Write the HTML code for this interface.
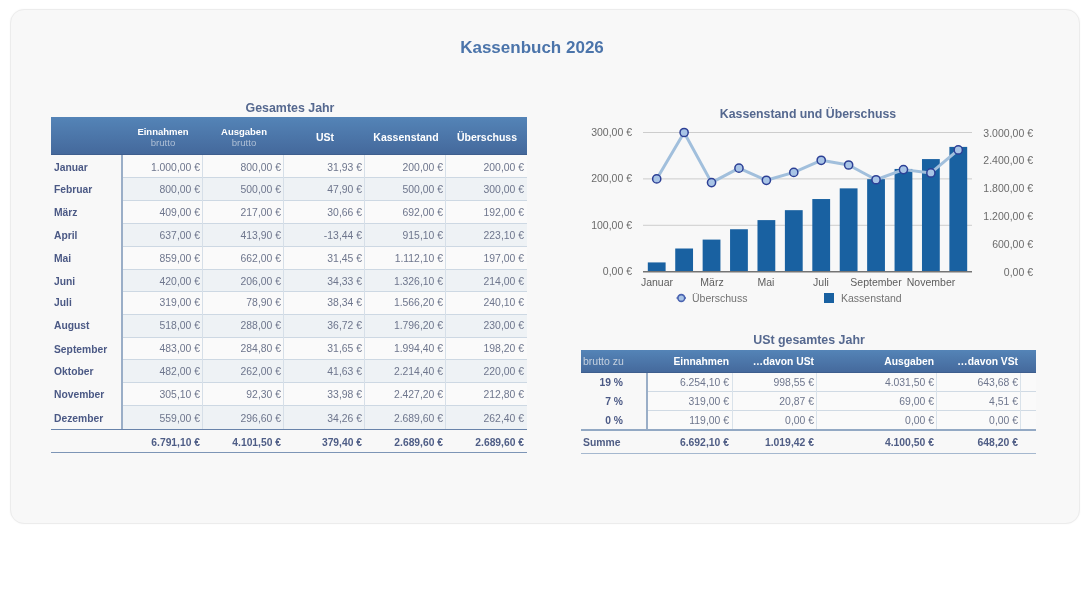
<!DOCTYPE html>
<html><head><meta charset="utf-8"><style>
html,body{margin:0;padding:0;background:#fff;width:1090px;height:593px;overflow:hidden;position:relative;font-family:"Liberation Sans", sans-serif;}
.card{position:absolute;left:10px;top:9px;width:1068px;height:513px;background:#f8f8f8;border:1px solid #ececec;border-radius:14px;box-shadow:0 0 2px rgba(0,0,0,0.04);}
.t{position:absolute;white-space:nowrap;will-change:transform;}
.r{position:absolute;}
</style></head><body>
<div class="card"></div><div class="t" style="left:231.5px;width:600px;text-align:center;top:37.52px;font-size:17px;line-height:19.55px;color:#4b74aa;font-weight:bold;">Kassenbuch 2026</div><div class="t" style="left:-10.100000000000023px;width:600px;text-align:center;top:101.28px;font-size:12.4px;line-height:14.26px;color:#55688f;font-weight:bold;">Gesamtes Jahr</div><div class="r" style="left:51.00px;top:117.00px;width:476.00px;height:37.60px;background:linear-gradient(#5484b7,#44689b);box-shadow:inset 0 -1px 0 #3e5e8e"></div><div class="t" style="left:-137.5px;width:600px;text-align:center;top:127.40px;font-size:9.5px;line-height:10.92px;color:#ffffff;font-weight:bold;">Einnahmen</div><div class="t" style="left:-137.5px;width:600px;text-align:center;top:136.91px;font-size:9.6px;line-height:11.04px;color:#aebfd5;font-weight:normal;">brutto</div><div class="t" style="left:-56.5px;width:600px;text-align:center;top:127.40px;font-size:9.5px;line-height:10.92px;color:#ffffff;font-weight:bold;">Ausgaben</div><div class="t" style="left:-56.5px;width:600px;text-align:center;top:136.91px;font-size:9.6px;line-height:11.04px;color:#aebfd5;font-weight:normal;">brutto</div><div class="t" style="left:24.5px;width:600px;text-align:center;top:131.30px;font-size:10.5px;line-height:12.07px;color:#ffffff;font-weight:bold;">USt</div><div class="t" style="left:105.5px;width:600px;text-align:center;top:131.30px;font-size:10.5px;line-height:12.07px;color:#ffffff;font-weight:bold;">Kassenstand</div><div class="t" style="left:186.5px;width:600px;text-align:center;top:131.30px;font-size:10.5px;line-height:12.07px;color:#ffffff;font-weight:bold;">Überschuss</div><div class="r" style="left:122.00px;top:154.60px;width:405.00px;height:22.80px;background:#fafafa;"></div><div class="r" style="left:122.00px;top:177.40px;width:405.00px;height:23.00px;background:#eef2f5;"></div><div class="r" style="left:122.00px;top:200.40px;width:405.00px;height:23.10px;background:#fafafa;"></div><div class="r" style="left:122.00px;top:223.50px;width:405.00px;height:22.90px;background:#eef2f5;"></div><div class="r" style="left:122.00px;top:246.40px;width:405.00px;height:23.00px;background:#fafafa;"></div><div class="r" style="left:122.00px;top:269.40px;width:405.00px;height:21.70px;background:#eef2f5;"></div><div class="r" style="left:122.00px;top:291.10px;width:405.00px;height:23.10px;background:#fafafa;"></div><div class="r" style="left:122.00px;top:314.20px;width:405.00px;height:22.80px;background:#eef2f5;"></div><div class="r" style="left:122.00px;top:337.00px;width:405.00px;height:22.60px;background:#fafafa;"></div><div class="r" style="left:122.00px;top:359.60px;width:405.00px;height:22.70px;background:#eef2f5;"></div><div class="r" style="left:122.00px;top:382.30px;width:405.00px;height:23.00px;background:#fafafa;"></div><div class="r" style="left:122.00px;top:405.30px;width:405.00px;height:24.10px;background:#eef2f5;"></div><div class="r" style="left:122.00px;top:176.90px;width:405.00px;height:1.00px;background:#cdd8e3;"></div><div class="r" style="left:122.00px;top:199.90px;width:405.00px;height:1.00px;background:#cdd8e3;"></div><div class="r" style="left:122.00px;top:223.00px;width:405.00px;height:1.00px;background:#cdd8e3;"></div><div class="r" style="left:122.00px;top:245.90px;width:405.00px;height:1.00px;background:#cdd8e3;"></div><div class="r" style="left:122.00px;top:268.90px;width:405.00px;height:1.00px;background:#cdd8e3;"></div><div class="r" style="left:122.00px;top:290.60px;width:405.00px;height:1.00px;background:#cdd8e3;"></div><div class="r" style="left:122.00px;top:313.70px;width:405.00px;height:1.00px;background:#cdd8e3;"></div><div class="r" style="left:122.00px;top:336.50px;width:405.00px;height:1.00px;background:#cdd8e3;"></div><div class="r" style="left:122.00px;top:359.10px;width:405.00px;height:1.00px;background:#cdd8e3;"></div><div class="r" style="left:122.00px;top:381.80px;width:405.00px;height:1.00px;background:#cdd8e3;"></div><div class="r" style="left:122.00px;top:404.80px;width:405.00px;height:1.00px;background:#cdd8e3;"></div><div class="r" style="left:202.30px;top:154.60px;width:1.00px;height:274.70px;background:#d6dfe8;"></div><div class="r" style="left:283.30px;top:154.60px;width:1.00px;height:274.70px;background:#d6dfe8;"></div><div class="r" style="left:364.30px;top:154.60px;width:1.00px;height:274.70px;background:#d6dfe8;"></div><div class="r" style="left:445.30px;top:154.60px;width:1.00px;height:274.70px;background:#d6dfe8;"></div><div class="r" style="left:121.20px;top:154.60px;width:1.60px;height:274.70px;background:#9aaec7;"></div><div class="r" style="left:51.00px;top:428.70px;width:476.00px;height:1.40px;background:#6883aa;"></div><div class="r" style="left:51.00px;top:451.80px;width:476.00px;height:1.30px;background:#7d95b6;"></div><div class="t" style="left:54px;top:161.68px;font-size:10.3px;line-height:11.85px;color:#4b5985;font-weight:bold;">Januar</div><div class="t" style="left:-199.8px;width:400px;text-align:right;top:161.59px;font-size:10.4px;line-height:11.96px;color:#6e768d;font-weight:normal;">1.000,00 €</div><div class="t" style="left:-118.80000000000001px;width:400px;text-align:right;top:161.59px;font-size:10.4px;line-height:11.96px;color:#6e768d;font-weight:normal;">800,00 €</div><div class="t" style="left:-37.80000000000001px;width:400px;text-align:right;top:161.59px;font-size:10.4px;line-height:11.96px;color:#6e768d;font-weight:normal;">31,93 €</div><div class="t" style="left:43.19999999999999px;width:400px;text-align:right;top:161.59px;font-size:10.4px;line-height:11.96px;color:#6e768d;font-weight:normal;">200,00 €</div><div class="t" style="left:124.20000000000005px;width:400px;text-align:right;top:161.59px;font-size:10.4px;line-height:11.96px;color:#6e768d;font-weight:normal;">200,00 €</div><div class="t" style="left:54px;top:184.08px;font-size:10.3px;line-height:11.85px;color:#4b5985;font-weight:bold;">Februar</div><div class="t" style="left:-199.8px;width:400px;text-align:right;top:183.99px;font-size:10.4px;line-height:11.96px;color:#6e768d;font-weight:normal;">800,00 €</div><div class="t" style="left:-118.80000000000001px;width:400px;text-align:right;top:183.99px;font-size:10.4px;line-height:11.96px;color:#6e768d;font-weight:normal;">500,00 €</div><div class="t" style="left:-37.80000000000001px;width:400px;text-align:right;top:183.99px;font-size:10.4px;line-height:11.96px;color:#6e768d;font-weight:normal;">47,90 €</div><div class="t" style="left:43.19999999999999px;width:400px;text-align:right;top:183.99px;font-size:10.4px;line-height:11.96px;color:#6e768d;font-weight:normal;">500,00 €</div><div class="t" style="left:124.20000000000005px;width:400px;text-align:right;top:183.99px;font-size:10.4px;line-height:11.96px;color:#6e768d;font-weight:normal;">300,00 €</div><div class="t" style="left:54px;top:207.18px;font-size:10.3px;line-height:11.85px;color:#4b5985;font-weight:bold;">März</div><div class="t" style="left:-199.8px;width:400px;text-align:right;top:207.09px;font-size:10.4px;line-height:11.96px;color:#6e768d;font-weight:normal;">409,00 €</div><div class="t" style="left:-118.80000000000001px;width:400px;text-align:right;top:207.09px;font-size:10.4px;line-height:11.96px;color:#6e768d;font-weight:normal;">217,00 €</div><div class="t" style="left:-37.80000000000001px;width:400px;text-align:right;top:207.09px;font-size:10.4px;line-height:11.96px;color:#6e768d;font-weight:normal;">30,66 €</div><div class="t" style="left:43.19999999999999px;width:400px;text-align:right;top:207.09px;font-size:10.4px;line-height:11.96px;color:#6e768d;font-weight:normal;">692,00 €</div><div class="t" style="left:124.20000000000005px;width:400px;text-align:right;top:207.09px;font-size:10.4px;line-height:11.96px;color:#6e768d;font-weight:normal;">192,00 €</div><div class="t" style="left:54px;top:230.38px;font-size:10.3px;line-height:11.85px;color:#4b5985;font-weight:bold;">April</div><div class="t" style="left:-199.8px;width:400px;text-align:right;top:230.29px;font-size:10.4px;line-height:11.96px;color:#6e768d;font-weight:normal;">637,00 €</div><div class="t" style="left:-118.80000000000001px;width:400px;text-align:right;top:230.29px;font-size:10.4px;line-height:11.96px;color:#6e768d;font-weight:normal;">413,90 €</div><div class="t" style="left:-37.80000000000001px;width:400px;text-align:right;top:230.29px;font-size:10.4px;line-height:11.96px;color:#6e768d;font-weight:normal;">-13,44 €</div><div class="t" style="left:43.19999999999999px;width:400px;text-align:right;top:230.29px;font-size:10.4px;line-height:11.96px;color:#6e768d;font-weight:normal;">915,10 €</div><div class="t" style="left:124.20000000000005px;width:400px;text-align:right;top:230.29px;font-size:10.4px;line-height:11.96px;color:#6e768d;font-weight:normal;">223,10 €</div><div class="t" style="left:54px;top:252.68px;font-size:10.3px;line-height:11.85px;color:#4b5985;font-weight:bold;">Mai</div><div class="t" style="left:-199.8px;width:400px;text-align:right;top:252.59px;font-size:10.4px;line-height:11.96px;color:#6e768d;font-weight:normal;">859,00 €</div><div class="t" style="left:-118.80000000000001px;width:400px;text-align:right;top:252.59px;font-size:10.4px;line-height:11.96px;color:#6e768d;font-weight:normal;">662,00 €</div><div class="t" style="left:-37.80000000000001px;width:400px;text-align:right;top:252.59px;font-size:10.4px;line-height:11.96px;color:#6e768d;font-weight:normal;">31,45 €</div><div class="t" style="left:43.19999999999999px;width:400px;text-align:right;top:252.59px;font-size:10.4px;line-height:11.96px;color:#6e768d;font-weight:normal;">1.112,10 €</div><div class="t" style="left:124.20000000000005px;width:400px;text-align:right;top:252.59px;font-size:10.4px;line-height:11.96px;color:#6e768d;font-weight:normal;">197,00 €</div><div class="t" style="left:54px;top:275.68px;font-size:10.3px;line-height:11.85px;color:#4b5985;font-weight:bold;">Juni</div><div class="t" style="left:-199.8px;width:400px;text-align:right;top:275.59px;font-size:10.4px;line-height:11.96px;color:#6e768d;font-weight:normal;">420,00 €</div><div class="t" style="left:-118.80000000000001px;width:400px;text-align:right;top:275.59px;font-size:10.4px;line-height:11.96px;color:#6e768d;font-weight:normal;">206,00 €</div><div class="t" style="left:-37.80000000000001px;width:400px;text-align:right;top:275.59px;font-size:10.4px;line-height:11.96px;color:#6e768d;font-weight:normal;">34,33 €</div><div class="t" style="left:43.19999999999999px;width:400px;text-align:right;top:275.59px;font-size:10.4px;line-height:11.96px;color:#6e768d;font-weight:normal;">1.326,10 €</div><div class="t" style="left:124.20000000000005px;width:400px;text-align:right;top:275.59px;font-size:10.4px;line-height:11.96px;color:#6e768d;font-weight:normal;">214,00 €</div><div class="t" style="left:54px;top:297.48px;font-size:10.3px;line-height:11.85px;color:#4b5985;font-weight:bold;">Juli</div><div class="t" style="left:-199.8px;width:400px;text-align:right;top:297.39px;font-size:10.4px;line-height:11.96px;color:#6e768d;font-weight:normal;">319,00 €</div><div class="t" style="left:-118.80000000000001px;width:400px;text-align:right;top:297.39px;font-size:10.4px;line-height:11.96px;color:#6e768d;font-weight:normal;">78,90 €</div><div class="t" style="left:-37.80000000000001px;width:400px;text-align:right;top:297.39px;font-size:10.4px;line-height:11.96px;color:#6e768d;font-weight:normal;">38,34 €</div><div class="t" style="left:43.19999999999999px;width:400px;text-align:right;top:297.39px;font-size:10.4px;line-height:11.96px;color:#6e768d;font-weight:normal;">1.566,20 €</div><div class="t" style="left:124.20000000000005px;width:400px;text-align:right;top:297.39px;font-size:10.4px;line-height:11.96px;color:#6e768d;font-weight:normal;">240,10 €</div><div class="t" style="left:54px;top:320.38px;font-size:10.3px;line-height:11.85px;color:#4b5985;font-weight:bold;">August</div><div class="t" style="left:-199.8px;width:400px;text-align:right;top:320.29px;font-size:10.4px;line-height:11.96px;color:#6e768d;font-weight:normal;">518,00 €</div><div class="t" style="left:-118.80000000000001px;width:400px;text-align:right;top:320.29px;font-size:10.4px;line-height:11.96px;color:#6e768d;font-weight:normal;">288,00 €</div><div class="t" style="left:-37.80000000000001px;width:400px;text-align:right;top:320.29px;font-size:10.4px;line-height:11.96px;color:#6e768d;font-weight:normal;">36,72 €</div><div class="t" style="left:43.19999999999999px;width:400px;text-align:right;top:320.29px;font-size:10.4px;line-height:11.96px;color:#6e768d;font-weight:normal;">1.796,20 €</div><div class="t" style="left:124.20000000000005px;width:400px;text-align:right;top:320.29px;font-size:10.4px;line-height:11.96px;color:#6e768d;font-weight:normal;">230,00 €</div><div class="t" style="left:54px;top:343.58px;font-size:10.3px;line-height:11.85px;color:#4b5985;font-weight:bold;">September</div><div class="t" style="left:-199.8px;width:400px;text-align:right;top:343.49px;font-size:10.4px;line-height:11.96px;color:#6e768d;font-weight:normal;">483,00 €</div><div class="t" style="left:-118.80000000000001px;width:400px;text-align:right;top:343.49px;font-size:10.4px;line-height:11.96px;color:#6e768d;font-weight:normal;">284,80 €</div><div class="t" style="left:-37.80000000000001px;width:400px;text-align:right;top:343.49px;font-size:10.4px;line-height:11.96px;color:#6e768d;font-weight:normal;">31,65 €</div><div class="t" style="left:43.19999999999999px;width:400px;text-align:right;top:343.49px;font-size:10.4px;line-height:11.96px;color:#6e768d;font-weight:normal;">1.994,40 €</div><div class="t" style="left:124.20000000000005px;width:400px;text-align:right;top:343.49px;font-size:10.4px;line-height:11.96px;color:#6e768d;font-weight:normal;">198,20 €</div><div class="t" style="left:54px;top:366.38px;font-size:10.3px;line-height:11.85px;color:#4b5985;font-weight:bold;">Oktober</div><div class="t" style="left:-199.8px;width:400px;text-align:right;top:366.29px;font-size:10.4px;line-height:11.96px;color:#6e768d;font-weight:normal;">482,00 €</div><div class="t" style="left:-118.80000000000001px;width:400px;text-align:right;top:366.29px;font-size:10.4px;line-height:11.96px;color:#6e768d;font-weight:normal;">262,00 €</div><div class="t" style="left:-37.80000000000001px;width:400px;text-align:right;top:366.29px;font-size:10.4px;line-height:11.96px;color:#6e768d;font-weight:normal;">41,63 €</div><div class="t" style="left:43.19999999999999px;width:400px;text-align:right;top:366.29px;font-size:10.4px;line-height:11.96px;color:#6e768d;font-weight:normal;">2.214,40 €</div><div class="t" style="left:124.20000000000005px;width:400px;text-align:right;top:366.29px;font-size:10.4px;line-height:11.96px;color:#6e768d;font-weight:normal;">220,00 €</div><div class="t" style="left:54px;top:389.18px;font-size:10.3px;line-height:11.85px;color:#4b5985;font-weight:bold;">November</div><div class="t" style="left:-199.8px;width:400px;text-align:right;top:389.09px;font-size:10.4px;line-height:11.96px;color:#6e768d;font-weight:normal;">305,10 €</div><div class="t" style="left:-118.80000000000001px;width:400px;text-align:right;top:389.09px;font-size:10.4px;line-height:11.96px;color:#6e768d;font-weight:normal;">92,30 €</div><div class="t" style="left:-37.80000000000001px;width:400px;text-align:right;top:389.09px;font-size:10.4px;line-height:11.96px;color:#6e768d;font-weight:normal;">33,98 €</div><div class="t" style="left:43.19999999999999px;width:400px;text-align:right;top:389.09px;font-size:10.4px;line-height:11.96px;color:#6e768d;font-weight:normal;">2.427,20 €</div><div class="t" style="left:124.20000000000005px;width:400px;text-align:right;top:389.09px;font-size:10.4px;line-height:11.96px;color:#6e768d;font-weight:normal;">212,80 €</div><div class="t" style="left:54px;top:412.68px;font-size:10.3px;line-height:11.85px;color:#4b5985;font-weight:bold;">Dezember</div><div class="t" style="left:-199.8px;width:400px;text-align:right;top:412.59px;font-size:10.4px;line-height:11.96px;color:#6e768d;font-weight:normal;">559,00 €</div><div class="t" style="left:-118.80000000000001px;width:400px;text-align:right;top:412.59px;font-size:10.4px;line-height:11.96px;color:#6e768d;font-weight:normal;">296,60 €</div><div class="t" style="left:-37.80000000000001px;width:400px;text-align:right;top:412.59px;font-size:10.4px;line-height:11.96px;color:#6e768d;font-weight:normal;">34,26 €</div><div class="t" style="left:43.19999999999999px;width:400px;text-align:right;top:412.59px;font-size:10.4px;line-height:11.96px;color:#6e768d;font-weight:normal;">2.689,60 €</div><div class="t" style="left:124.20000000000005px;width:400px;text-align:right;top:412.59px;font-size:10.4px;line-height:11.96px;color:#6e768d;font-weight:normal;">262,40 €</div><div class="t" style="left:-199.8px;width:400px;text-align:right;top:436.88px;font-size:10.3px;line-height:11.85px;color:#4e5d86;font-weight:bold;">6.791,10 €</div><div class="t" style="left:-118.80000000000001px;width:400px;text-align:right;top:436.88px;font-size:10.3px;line-height:11.85px;color:#4e5d86;font-weight:bold;">4.101,50 €</div><div class="t" style="left:-37.80000000000001px;width:400px;text-align:right;top:436.88px;font-size:10.3px;line-height:11.85px;color:#4e5d86;font-weight:bold;">379,40 €</div><div class="t" style="left:43.19999999999999px;width:400px;text-align:right;top:436.88px;font-size:10.3px;line-height:11.85px;color:#4e5d86;font-weight:bold;">2.689,60 €</div><div class="t" style="left:124.20000000000005px;width:400px;text-align:right;top:436.88px;font-size:10.3px;line-height:11.85px;color:#4e5d86;font-weight:bold;">2.689,60 €</div><div class="t" style="left:507.6px;width:600px;text-align:center;top:107.47px;font-size:12.3px;line-height:14.14px;color:#55688f;font-weight:bold;">Kassenstand und Überschuss</div><svg class="t" style="left:0;top:0" width="1090" height="593"><line x1="643" y1="225.30" x2="972" y2="225.30" stroke="#cdcdcd" stroke-width="1"/><line x1="643" y1="178.90" x2="972" y2="178.90" stroke="#cdcdcd" stroke-width="1"/><line x1="643" y1="132.50" x2="972" y2="132.50" stroke="#cdcdcd" stroke-width="1"/><rect x="647.81" y="262.42" width="17.8" height="9.28" fill="#1961a1"/><rect x="675.23" y="248.50" width="17.8" height="23.20" fill="#1961a1"/><rect x="702.64" y="239.59" width="17.8" height="32.11" fill="#1961a1"/><rect x="730.06" y="229.24" width="17.8" height="42.46" fill="#1961a1"/><rect x="757.48" y="220.10" width="17.8" height="51.60" fill="#1961a1"/><rect x="784.89" y="210.17" width="17.8" height="61.53" fill="#1961a1"/><rect x="812.31" y="199.03" width="17.8" height="72.67" fill="#1961a1"/><rect x="839.73" y="188.36" width="17.8" height="83.34" fill="#1961a1"/><rect x="867.14" y="179.16" width="17.8" height="92.54" fill="#1961a1"/><rect x="894.56" y="168.95" width="17.8" height="102.75" fill="#1961a1"/><rect x="921.98" y="159.08" width="17.8" height="112.62" fill="#1961a1"/><rect x="949.39" y="146.90" width="17.8" height="124.80" fill="#1961a1"/><line x1="643" y1="271.7" x2="972" y2="271.7" stroke="#747474" stroke-width="1.6"/><polyline points="656.71,178.90 684.12,132.50 711.54,182.61 738.96,168.18 766.38,180.29 793.79,172.40 821.21,160.29 848.62,164.98 876.04,179.74 903.46,169.62 930.88,172.96 958.29,149.95" fill="none" stroke="#a1bfdc" stroke-width="3" stroke-linejoin="round"/><circle cx="656.71" cy="178.90" r="4.1" fill="#a8c4e6" stroke="#2c3f95" stroke-width="1.5"/><circle cx="684.12" cy="132.50" r="4.1" fill="#a8c4e6" stroke="#2c3f95" stroke-width="1.5"/><circle cx="711.54" cy="182.61" r="4.1" fill="#a8c4e6" stroke="#2c3f95" stroke-width="1.5"/><circle cx="738.96" cy="168.18" r="4.1" fill="#a8c4e6" stroke="#2c3f95" stroke-width="1.5"/><circle cx="766.38" cy="180.29" r="4.1" fill="#a8c4e6" stroke="#2c3f95" stroke-width="1.5"/><circle cx="793.79" cy="172.40" r="4.1" fill="#a8c4e6" stroke="#2c3f95" stroke-width="1.5"/><circle cx="821.21" cy="160.29" r="4.1" fill="#a8c4e6" stroke="#2c3f95" stroke-width="1.5"/><circle cx="848.62" cy="164.98" r="4.1" fill="#a8c4e6" stroke="#2c3f95" stroke-width="1.5"/><circle cx="876.04" cy="179.74" r="4.1" fill="#a8c4e6" stroke="#2c3f95" stroke-width="1.5"/><circle cx="903.46" cy="169.62" r="4.1" fill="#a8c4e6" stroke="#2c3f95" stroke-width="1.5"/><circle cx="930.88" cy="172.96" r="4.1" fill="#a8c4e6" stroke="#2c3f95" stroke-width="1.5"/><circle cx="958.29" cy="149.95" r="4.1" fill="#a8c4e6" stroke="#2c3f95" stroke-width="1.5"/></svg><div class="t" style="left:231.60000000000002px;width:400px;text-align:right;top:265.20px;font-size:10.5px;line-height:12.07px;color:#6b6b6b;font-weight:normal;">0,00 €</div><div class="t" style="left:231.60000000000002px;width:400px;text-align:right;top:218.80px;font-size:10.5px;line-height:12.07px;color:#6b6b6b;font-weight:normal;">100,00 €</div><div class="t" style="left:231.60000000000002px;width:400px;text-align:right;top:172.40px;font-size:10.5px;line-height:12.07px;color:#6b6b6b;font-weight:normal;">200,00 €</div><div class="t" style="left:231.60000000000002px;width:400px;text-align:right;top:126.00px;font-size:10.5px;line-height:12.07px;color:#6b6b6b;font-weight:normal;">300,00 €</div><div class="t" style="left:633px;width:400px;text-align:right;top:265.70px;font-size:10.5px;line-height:12.07px;color:#6b6b6b;font-weight:normal;">0,00 €</div><div class="t" style="left:633px;width:400px;text-align:right;top:237.86px;font-size:10.5px;line-height:12.07px;color:#6b6b6b;font-weight:normal;">600,00 €</div><div class="t" style="left:633px;width:400px;text-align:right;top:210.02px;font-size:10.5px;line-height:12.07px;color:#6b6b6b;font-weight:normal;">1.200,00 €</div><div class="t" style="left:633px;width:400px;text-align:right;top:182.18px;font-size:10.5px;line-height:12.07px;color:#6b6b6b;font-weight:normal;">1.800,00 €</div><div class="t" style="left:633px;width:400px;text-align:right;top:154.34px;font-size:10.5px;line-height:12.07px;color:#6b6b6b;font-weight:normal;">2.400,00 €</div><div class="t" style="left:633px;width:400px;text-align:right;top:126.50px;font-size:10.5px;line-height:12.07px;color:#6b6b6b;font-weight:normal;">3.000,00 €</div><div class="t" style="left:356.70833333333337px;width:600px;text-align:center;top:275.90px;font-size:10.5px;line-height:12.07px;color:#5d5d5d;font-weight:normal;">Januar</div><div class="t" style="left:411.54166666666663px;width:600px;text-align:center;top:275.90px;font-size:10.5px;line-height:12.07px;color:#5d5d5d;font-weight:normal;">März</div><div class="t" style="left:466.375px;width:600px;text-align:center;top:275.90px;font-size:10.5px;line-height:12.07px;color:#5d5d5d;font-weight:normal;">Mai</div><div class="t" style="left:521.2083333333334px;width:600px;text-align:center;top:275.90px;font-size:10.5px;line-height:12.07px;color:#5d5d5d;font-weight:normal;">Juli</div><div class="t" style="left:576.0416666666667px;width:600px;text-align:center;top:275.90px;font-size:10.5px;line-height:12.07px;color:#5d5d5d;font-weight:normal;">September</div><div class="t" style="left:630.875px;width:600px;text-align:center;top:275.90px;font-size:10.5px;line-height:12.07px;color:#5d5d5d;font-weight:normal;">November</div><svg class="t" style="left:0;top:0" width="1090" height="593"><line x1="676.5" y1="298" x2="686" y2="298" stroke="#4a63b0" stroke-width="1.5"/><circle cx="681.3" cy="298" r="3.4" fill="#a8c4e6" stroke="#4a63b0" stroke-width="1.6"/><rect x="824" y="293" width="10" height="10" fill="#1961a1"/></svg><div class="t" style="left:691.6px;top:291.80px;font-size:10.5px;line-height:12.07px;color:#727272;font-weight:normal;">Überschuss</div><div class="t" style="left:840.5px;top:291.80px;font-size:10.5px;line-height:12.07px;color:#727272;font-weight:normal;">Kassenstand</div><div class="t" style="left:508.9px;width:600px;text-align:center;top:332.98px;font-size:12.4px;line-height:14.26px;color:#55688f;font-weight:bold;">USt gesamtes Jahr</div><div class="r" style="left:581.00px;top:349.60px;width:455.00px;height:23.00px;background:linear-gradient(#5484b7,#44689b);box-shadow:inset 0 -1px 0 #3e5e8e"></div><div class="t" style="left:583.3px;top:354.50px;font-size:10.5px;line-height:12.07px;color:#c6d1df;font-weight:normal;">brutto zu</div><div class="t" style="left:329.20000000000005px;width:400px;text-align:right;top:355.88px;font-size:10.3px;line-height:11.85px;color:#ffffff;font-weight:bold;">Einnahmen</div><div class="t" style="left:414.20000000000005px;width:400px;text-align:right;top:355.88px;font-size:10.3px;line-height:11.85px;color:#ffffff;font-weight:bold;">…davon USt</div><div class="t" style="left:533.8px;width:400px;text-align:right;top:355.88px;font-size:10.3px;line-height:11.85px;color:#ffffff;font-weight:bold;">Ausgaben</div><div class="t" style="left:618.4px;width:400px;text-align:right;top:355.88px;font-size:10.3px;line-height:11.85px;color:#ffffff;font-weight:bold;">…davon VSt</div><div class="r" style="left:647.00px;top:372.60px;width:389.00px;height:18.90px;background:#fafafa;"></div><div class="r" style="left:647.00px;top:391.50px;width:389.00px;height:19.20px;background:#fafafa;"></div><div class="r" style="left:647.00px;top:410.70px;width:389.00px;height:18.90px;background:#fafafa;"></div><div class="r" style="left:647.00px;top:390.90px;width:389.00px;height:1.20px;background:#d0dae4;"></div><div class="r" style="left:647.00px;top:410.10px;width:389.00px;height:1.20px;background:#d0dae4;"></div><div class="r" style="left:731.50px;top:372.60px;width:1.00px;height:57.00px;background:#d9e2ea;"></div><div class="r" style="left:815.50px;top:372.60px;width:1.00px;height:57.00px;background:#d9e2ea;"></div><div class="r" style="left:935.50px;top:372.60px;width:1.00px;height:57.00px;background:#d9e2ea;"></div><div class="r" style="left:1019.50px;top:372.60px;width:1.00px;height:57.00px;background:#d9e2ea;"></div><div class="r" style="left:646.20px;top:372.60px;width:1.60px;height:57.00px;background:#9aaec7;"></div><div class="r" style="left:581.00px;top:429.30px;width:455.00px;height:1.30px;background:#93a9c4;"></div><div class="r" style="left:581.00px;top:453.20px;width:455.00px;height:1.30px;background:#a5b8cf;"></div><div class="t" style="left:223.10000000000002px;width:400px;text-align:right;top:377.28px;font-size:10.3px;line-height:11.85px;color:#4b5985;font-weight:bold;">19 %</div><div class="t" style="left:329.20000000000005px;width:400px;text-align:right;top:377.19px;font-size:10.4px;line-height:11.96px;color:#6e768d;font-weight:normal;">6.254,10 €</div><div class="t" style="left:414.20000000000005px;width:400px;text-align:right;top:377.19px;font-size:10.4px;line-height:11.96px;color:#6e768d;font-weight:normal;">998,55 €</div><div class="t" style="left:533.8px;width:400px;text-align:right;top:377.19px;font-size:10.4px;line-height:11.96px;color:#6e768d;font-weight:normal;">4.031,50 €</div><div class="t" style="left:618.4px;width:400px;text-align:right;top:377.19px;font-size:10.4px;line-height:11.96px;color:#6e768d;font-weight:normal;">643,68 €</div><div class="t" style="left:223.10000000000002px;width:400px;text-align:right;top:396.18px;font-size:10.3px;line-height:11.85px;color:#4b5985;font-weight:bold;">7 %</div><div class="t" style="left:329.20000000000005px;width:400px;text-align:right;top:396.09px;font-size:10.4px;line-height:11.96px;color:#6e768d;font-weight:normal;">319,00 €</div><div class="t" style="left:414.20000000000005px;width:400px;text-align:right;top:396.09px;font-size:10.4px;line-height:11.96px;color:#6e768d;font-weight:normal;">20,87 €</div><div class="t" style="left:533.8px;width:400px;text-align:right;top:396.09px;font-size:10.4px;line-height:11.96px;color:#6e768d;font-weight:normal;">69,00 €</div><div class="t" style="left:618.4px;width:400px;text-align:right;top:396.09px;font-size:10.4px;line-height:11.96px;color:#6e768d;font-weight:normal;">4,51 €</div><div class="t" style="left:223.10000000000002px;width:400px;text-align:right;top:415.38px;font-size:10.3px;line-height:11.85px;color:#4b5985;font-weight:bold;">0 %</div><div class="t" style="left:329.20000000000005px;width:400px;text-align:right;top:415.29px;font-size:10.4px;line-height:11.96px;color:#6e768d;font-weight:normal;">119,00 €</div><div class="t" style="left:414.20000000000005px;width:400px;text-align:right;top:415.29px;font-size:10.4px;line-height:11.96px;color:#6e768d;font-weight:normal;">0,00 €</div><div class="t" style="left:533.8px;width:400px;text-align:right;top:415.29px;font-size:10.4px;line-height:11.96px;color:#6e768d;font-weight:normal;">0,00 €</div><div class="t" style="left:618.4px;width:400px;text-align:right;top:415.29px;font-size:10.4px;line-height:11.96px;color:#6e768d;font-weight:normal;">0,00 €</div><div class="t" style="left:583px;top:437.19px;font-size:10.4px;line-height:11.96px;color:#4f5d85;font-weight:bold;">Summe</div><div class="t" style="left:329.20000000000005px;width:400px;text-align:right;top:437.19px;font-size:10.4px;line-height:11.96px;color:#4f5d85;font-weight:bold;">6.692,10 €</div><div class="t" style="left:414.20000000000005px;width:400px;text-align:right;top:437.19px;font-size:10.4px;line-height:11.96px;color:#4f5d85;font-weight:bold;">1.019,42 €</div><div class="t" style="left:533.8px;width:400px;text-align:right;top:437.19px;font-size:10.4px;line-height:11.96px;color:#4f5d85;font-weight:bold;">4.100,50 €</div><div class="t" style="left:618.4px;width:400px;text-align:right;top:437.19px;font-size:10.4px;line-height:11.96px;color:#4f5d85;font-weight:bold;">648,20 €</div>
</body></html>
